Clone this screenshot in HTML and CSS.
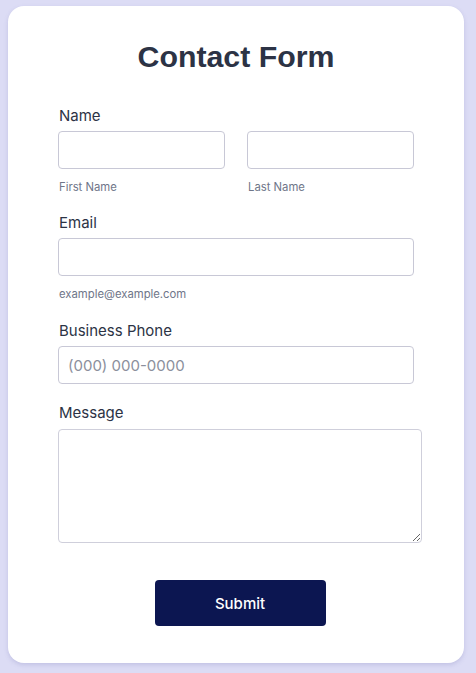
FILE: index.html
```html
<!DOCTYPE html>
<html lang="en">
<head>
<meta charset="utf-8">
<title>Contact Form</title>
<link rel="stylesheet" href="styles.css">
</head>
<body>
<main class="card">
  <h1 class="title">Contact Form</h1>
  <form class="form">
    <div class="group group-name">
      <label class="label">Name</label>
      <div class="row">
        <div class="col">
          <input class="input" type="text">
          <span class="sub">First Name</span>
        </div>
        <div class="col">
          <input class="input" type="text">
          <span class="sub">Last Name</span>
        </div>
      </div>
    </div>
    <div class="group">
      <label class="label">Email</label>
      <input class="input" type="email">
      <span class="sub">example@example.com</span>
    </div>
    <div class="group group-phone">
      <label class="label">Business Phone</label>
      <input class="input" type="tel" placeholder="(000) 000-0000">
    </div>
    <div class="group group-msg">
      <label class="label label-msg">Message</label>
      <textarea class="textarea"></textarea>
    </div>
    <div class="actions">
      <button class="submit" type="button">Submit</button>
    </div>
  </form>
</main>
</body>
</html>
```
FILE: styles.css
```css
html, body {
  margin: 0;
  padding: 0;
}
body {
  background: #dcdcf5;
  font-family: Inter, "Noto Sans", sans-serif;
  padding: 6px 12px 9px 8px;
}
.card {
  width: 456px;
  box-sizing: border-box;
  background: #ffffff;
  border-radius: 16px;
  box-shadow: 0 2px 4px rgba(120, 120, 180, 0.25);
  padding: 33px 50px 37px 50px;
}
.title {
  margin: 0 -8px 30px -8px;
  font-family: "Liberation Sans", Arial, sans-serif;
  font-weight: 700;
  font-size: 30.3px;
  line-height: 36px;
  color: #2c3345;
  text-align: center;
}
.form {
  display: flex;
  flex-direction: column;
}
.group {
  display: flex;
  flex-direction: column;
  margin-bottom: 19px;
}
.group-name {
  margin-bottom: 18px;
}
.group-phone {
  margin-bottom: 18px;
}
.group-msg {
  margin-bottom: 37px;
}
.label {
  font-size: 15px;
  line-height: 18px;
  color: #2c3345;
  padding-left: 1px;
  padding-top: 2px;
  margin-bottom: 6px;
}
.label-msg {
  margin-bottom: 7px;
}
.row {
  display: flex;
  gap: 22px;
}
.col {
  flex: 1;
  display: flex;
  flex-direction: column;
}
.input {
  box-sizing: border-box;
  width: 100%;
  height: 38px;
  border: 1px solid #c8c8d6;
  border-radius: 4px;
  padding: 0 9px;
  font-family: Inter, "Noto Sans", sans-serif;
  font-size: 15px;
  color: #2c3345;
  background: #fff;
  margin: 0;
  outline: none;
}
.input::placeholder {
  color: #8b8f9c;
}
.sub {
  margin-top: 11px;
  font-size: 11.3px;
  line-height: 14px;
  color: #6f7689;
  padding-left: 1px;
}
.textarea {
  box-sizing: border-box;
  width: 364px;
  height: 114px;
  border: 1px solid #cfcfdb;
  border-radius: 4px;
  margin: 0;
  padding: 8px 10px;
  font-family: Inter, "Noto Sans", sans-serif;
  font-size: 15px;
  background: #fff;
  outline: none;
}
.actions {
  width: 364px;
  display: flex;
  justify-content: center;
}
.submit {
  width: 171px;
  height: 46px;
  border: none;
  border-radius: 4px;
  background: #0c1651;
  color: #ffffff;
  font-family: Inter, "Noto Sans", sans-serif;
  font-weight: 500;
  font-size: 15px;
  cursor: pointer;
}
```
